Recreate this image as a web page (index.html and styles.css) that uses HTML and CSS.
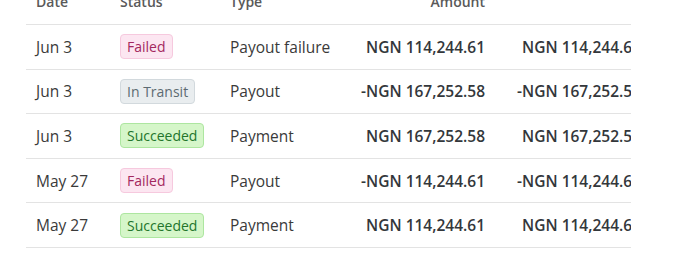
FILE: index.html
```html
<!DOCTYPE html>
<html>
<head>
<meta charset="utf-8">
<link rel="stylesheet" href="styles.css">
</head>
<body>
<div class="page">
  <div class="scroller">
    <table class="tx">
      <colgroup>
        <col class="c-date"><col class="c-status"><col class="c-type"><col class="c-amt"><col class="c-amt2">
      </colgroup>
      <thead>
        <tr><th>Date</th><th>Status</th><th>Type</th><th class="num">Amount</th><th></th></tr>
      </thead>
      <tbody>
        <tr><td>Jun 3</td><td><span class="badge failed">Failed</span></td><td>Payout failure</td><td class="num">NGN 114,244.61</td><td class="num">NGN 114,244.61</td></tr>
        <tr><td>Jun 3</td><td><span class="badge transit">In Transit</span></td><td>Payout</td><td class="num">-NGN 167,252.58</td><td class="num">-NGN 167,252.58</td></tr>
        <tr><td>Jun 3</td><td><span class="badge ok">Succeeded</span></td><td>Payment</td><td class="num">NGN 167,252.58</td><td class="num">NGN 167,252.58</td></tr>
        <tr><td>May 27</td><td><span class="badge failed">Failed</span></td><td>Payout</td><td class="num">-NGN 114,244.61</td><td class="num">-NGN 114,244.61</td></tr>
        <tr><td>May 27</td><td><span class="badge ok">Succeeded</span></td><td>Payment</td><td class="num">NGN 114,244.61</td><td class="num">NGN 114,244.61</td></tr>
      </tbody>
    </table>
  </div>
</div>
</body>
</html>
```
FILE: styles.css
```css
html, body { margin: 0; padding: 0; background: #fff; }
body { font-family: "Open Sans", "Noto Sans", sans-serif; color: #3a3a3a; }
.page { padding-left: 26px; margin-top: -8px; }
.scroller { width: 605px; overflow: hidden; }
.tx { border-collapse: collapse; table-layout: fixed; width: 625px; }
.c-date { width: 84px; }
.c-status { width: 110px; }
.c-type { width: 120px; }
.c-amt { width: 155px; }
.c-amt2 { width: 156px; }
.tx th {
  font-size: 14px; font-weight: 600; color: #5a5a5a; text-align: left;
  line-height: 20px; padding: 0 10px 12px; border-bottom: 1px solid #e3e3e3; white-space: nowrap;
}
.tx td {
  font-size: 15.5px; padding: 0 10px; height: 43.6px; border-bottom: 1px solid #e3e3e3;
  white-space: nowrap; overflow: hidden;
}
.tx .num { text-align: right; font-weight: 600; color: #33373b; }
.tx th.num { color: #5a5a5a; }
.badge {
  display: inline-block; font-size: 14px; line-height: 23px; padding: 0 6px;
  border-radius: 4px; border: 1px solid;
}
.failed { background: #fce6f1; border-color: #f6c9de; color: #a3285f; }
.transit { background: #e9edef; border-color: #d2d9dd; color: #5d6b72; }
.ok { background: #d5f6c9; border-color: #ade6a0; color: #23752c; }
```
